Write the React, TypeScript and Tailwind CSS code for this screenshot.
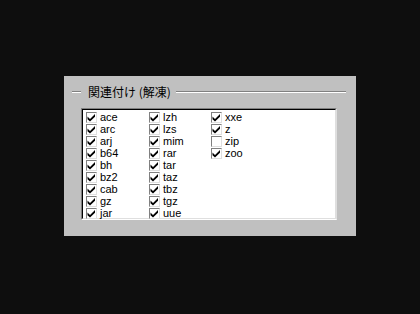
const columns: { name: string; checked: boolean }[][] = [
  [
    { name: 'ace', checked: true },
    { name: 'arc', checked: true },
    { name: 'arj', checked: true },
    { name: 'b64', checked: true },
    { name: 'bh', checked: true },
    { name: 'bz2', checked: true },
    { name: 'cab', checked: true },
    { name: 'gz', checked: true },
    { name: 'jar', checked: true },
  ],
  [
    { name: 'lzh', checked: true },
    { name: 'lzs', checked: true },
    { name: 'mim', checked: true },
    { name: 'rar', checked: true },
    { name: 'tar', checked: true },
    { name: 'taz', checked: true },
    { name: 'tbz', checked: true },
    { name: 'tgz', checked: true },
    { name: 'uue', checked: true },
  ],
  [
    { name: 'xxe', checked: true },
    { name: 'z', checked: true },
    { name: 'zip', checked: false },
    { name: 'zoo', checked: true },
  ],
]

function CheckBox({ checked }: { checked: boolean }) {
  return (
    <span className="w-[11px] h-[11px] shrink-0 bg-white border-t border-l border-[#808080] border-b border-r border-b-[#dfdfdf] border-r-[#dfdfdf] flex items-center justify-center">
      {checked && (
        <svg width="9" height="9" viewBox="0 0 9 9">
          <path d="M0.5 3.5 L3 6 L8 1 L8 3.8 L3 8.6 L0.5 6.2 Z" fill="#000" />
        </svg>
      )}
    </span>
  )
}

function Etched({ className }: { className: string }) {
  return (
    <div className={`flex flex-col ${className}`}>
      <div className="h-px bg-[#808080]" />
      <div className="h-px bg-white" />
    </div>
  )
}

export default function App() {
  return (
    <div className="w-[420px] h-[314px] bg-[#0e0e0e] pt-[76px] pl-[64px]">
      <div className="w-[292px] h-[160px] bg-[#c0c0c0] pt-[9px]">
        <div className="flex items-center h-[14px]">
          <Etched className="w-[9px] ml-[8px]" />
          <span
            className="ml-[7px] text-[12px] leading-[14px] text-black whitespace-nowrap"
            style={{ fontFamily: '"Noto Sans CJK JP", sans-serif' }}
          >
            関連付け (解凍)
          </span>
          <Etched className="flex-1 ml-[5px] mr-[10px]" />
        </div>
        <div className="ml-[17px] mt-[9px] w-[256px] h-[112px] border-t border-l border-[#808080] border-b border-r border-b-white border-r-[#dfdfdf]">
          <div className="w-full h-full bg-white border-t border-l border-black border-b border-r border-b-[#dfdfdf] border-r-[#dfdfdf] pl-[3px] pt-[1px] flex">
            {columns.map((col, ci) => (
              <div key={ci} className={ci === 0 ? 'w-[63px] flex flex-col' : 'w-[62px] flex flex-col'}>
                {col.map((item) => (
                  <div key={item.name} className="h-[12px] flex items-center gap-[3px]">
                    <CheckBox checked={item.checked} />
                    <span
                      className="text-[11px] leading-[12px] text-black"
                      style={{ fontFamily: '"Liberation Sans", Arial, sans-serif' }}
                    >
                      {item.name}
                    </span>
                  </div>
                ))}
              </div>
            ))}
          </div>
        </div>
      </div>
    </div>
  )
}
